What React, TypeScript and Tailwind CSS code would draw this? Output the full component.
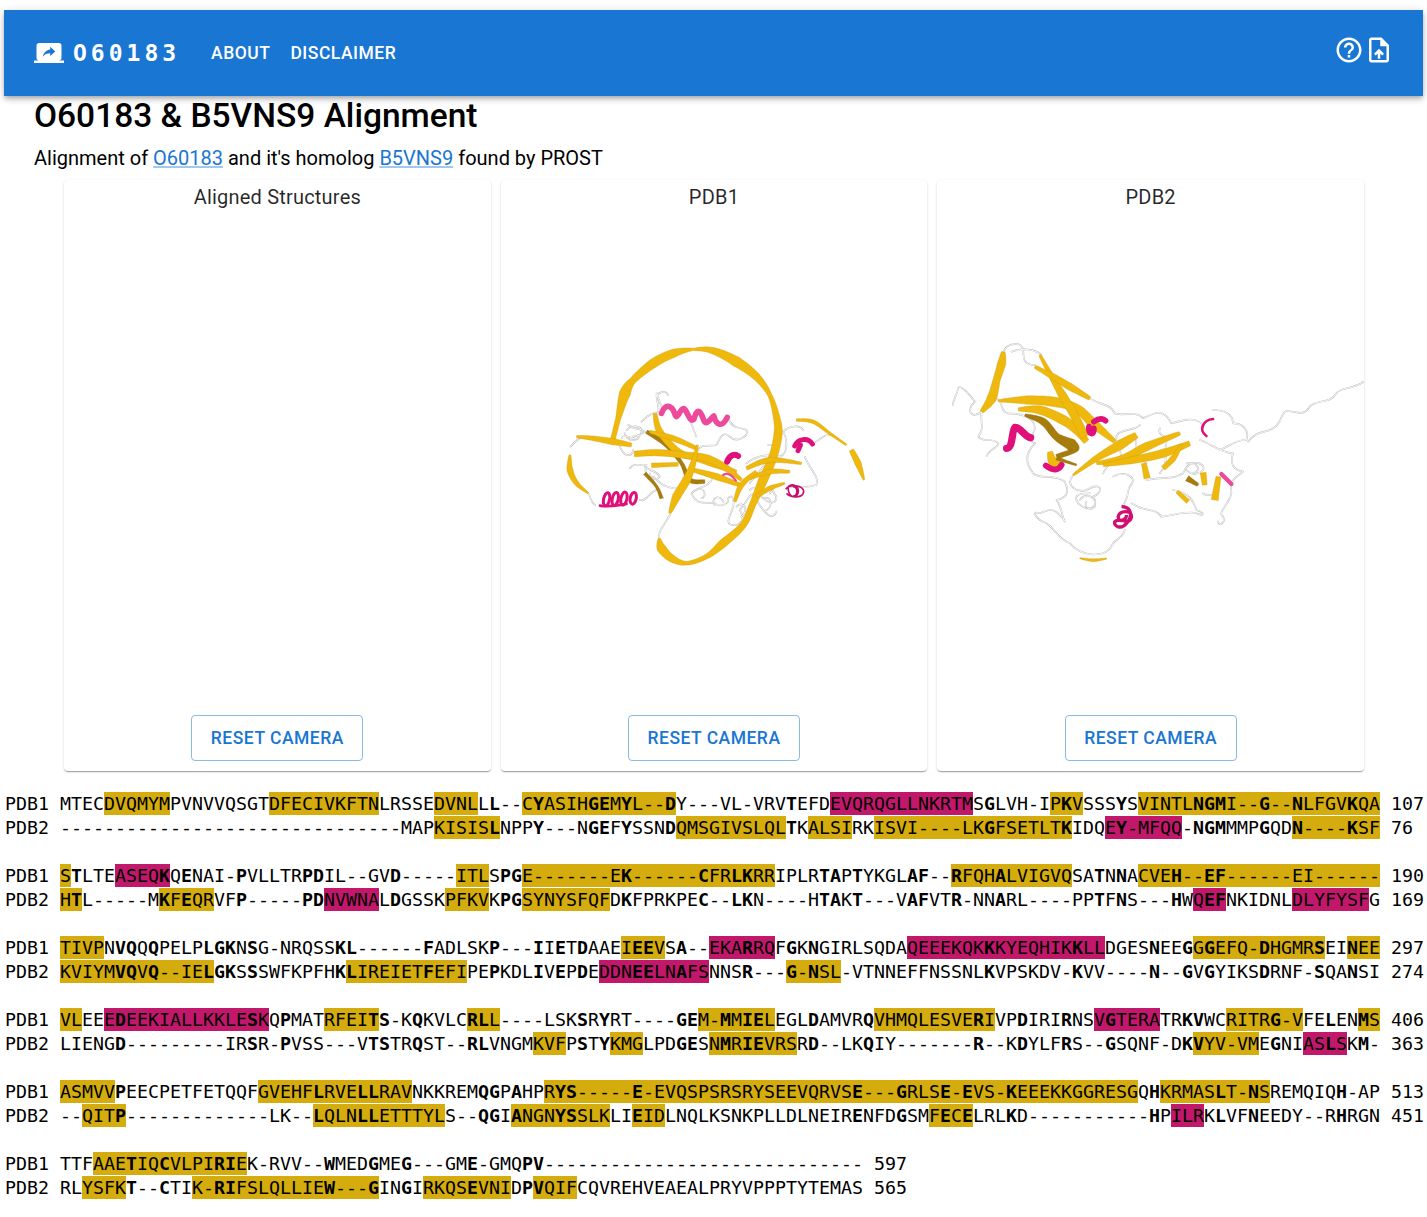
import { Fragment } from "react";

type Pt = [number, number, number];

// [..] strand, {..} helix, the rest is plain
const blocks: { a: string; b: string; na: number; nb: number }[] = [
  {
    a: "MTEC[DVQMYM]PVNVVQSGT[DFECIVKFTN]LRSSE[DVNL]LL--[CYASIHGEMYL--D]Y---VL-VRVTEFD{EVQRQGLLNKRTM}SGLVH-I[PKV]SSSYS[VINTLNGMI--G--NLFGVKQA]",
    b: "-------------------------------MAP[KISISL]NPPY---NGEFYSSND[QMSGIVSLQL]TK[ALSI]RK[ISVI----LKGFSETLTK]IDQ{EY-MFQQ}-NGMMMPGQD[N----KSF]",
    na: 107,
    nb: 76,
  },
  {
    a: "[S]TLTE{ASEQK}QENAI-PVLLTRPDIL--GVD-----[ITL]SPG[E-------EK------CFRLKRR]IPLRTAPTYKGLAF--[RFQHALVIGVQ]SATNNA[CVEH--EF------EI------]",
    b: "[HT]L-----M[KFEQR]VFP-----PD{NVWNA}LDGSSK[PFKV]KPG[SYNYSFQF]DKFPRKPEC--LKN----HTAKT---VAFVTR-NNARL----PPTFNS---HW{QEF}NKIDNL{DLYFYSF}G",
    na: 190,
    nb: 169,
  },
  {
    a: "[TIVP]NVQQQPELPLGKNSG-NRQSSKL------FADLSKP---IIETDAAE[IEEV]SA--{EKARRQ}FGKNGIRLSQDA{QEEEKQKKKYEQHIKKLL}DGESNEEG[GGEFQ-DHGMRS]EI[NEE]",
    b: "[KVIYMVQVQ--IEL]GKSSSWFKPFHK[LIREIETFEFI]PEPKDLIVEPDE{DDNEELNAFS}NNSR---[G-NSL]-VTNNEFFNSSNLKVPSKDV-KVV----N--GVGYIKSDRNF-SQANSI",
    na: 297,
    nb: 274,
  },
  {
    a: "[VL]EE{EDEEKIALLKKLESK}QPMAT[RFEIT]S-KQKVLC[RLL]----LSKSRYRT----GE[M-MMIEL]EGLDAMVRQ[VHMQLESVERI]VPDIRIRNS{VGTERA}TRKVWC[RITRG-V]FELEN[MS]",
    b: "LIENGD---------IRSR-PVSS---VTSTRQST--RLVNGM[KVF]PSTY[KMG]LPDGES[NMRIEVRS]RD--LKQIY-------R--KDYLFRS--GSQNF-DK[VYV-VM]EGNI{ASLS}KM-",
    na: 406,
    nb: 363,
  },
  {
    a: "[ASMVV]PEECPETFETQQF[GVEHFLRVELLRAV]NKKREMQGPAHP[RYS-----E-EVQSPSRSRYSEEVQRVSE---GRLSE-EVS-KEEEKKGGRESG]QH[KRMASLT-NS]REMQIQH-AP",
    b: "--[QITP]-------------LK--[LQLNLLETTTYL]S--QGI[ANGNYSSLK]LI[EID]LNQLKSNKPLLDLNEIRENFDGSM[FECE]LRLKD-----------HP{ILR}KLVFNEEDY--RHRGN",
    na: 513,
    nb: 451,
  },
  {
    a: "TTF[AAETIQCVLPIRIE]K-RVV--WMEDGMEG---GME-GMQPV-----------------------------",
    b: "RL[YSFK]T--CTI[K-RIFSLQLLIEW---G]INGI[RKQSEVNI]DP[VQIF]CQVREHVEAEALPRYVPPPTYTEMAS",
    na: 597,
    nb: 565,
  },
];

const plain = (s: string) => s.replace(/[\[\]{}]/g, "");

function SeqLine({ name, row, other, num }: { name: string; row: string; other: string; num: number }) {
  const cmp = plain(other);
  const parts = row.split(/(\[[^\]]*\]|\{[^}]*\})/).filter(Boolean);
  let pos = 0;
  return (
    <div className="h-6 leading-6 whitespace-pre">
      {name}{" "}
      {parts.map((p, i) => {
        const kind = p[0] === "[" ? "bg-[#d4ac0d]" : p[0] === "{" ? "bg-[#c2186b]" : "";
        const text = kind ? p.slice(1, -1) : p;
        return (
          <span key={i} className={`inline-block h-[23px] leading-[23px] align-top ${kind}`}>
            {text.split("").map((c, j) => {
              // identical residues are bold, the third column never reads bold in the shot
              const same = c !== "-" && c === cmp[pos] && pos !== 2;
              pos++;
              return same ? (
                <b key={j} className="font-bold">
                  {c}
                </b>
              ) : (
                <Fragment key={j}>{c}</Fragment>
              );
            })}
          </span>
        );
      })}{" "}
      {num}
    </div>
  );
}

// variable width ribbon along a smoothed centre line
function ribbonPath(pts: Pt[], f: number) {
  const P = [pts[0], ...pts, pts[pts.length - 1]];
  const out: Pt[] = [];
  for (let i = 1; i < P.length - 2; i++) {
    for (let k = 0; k < 10; k++) {
      const t = k / 10;
      const cr = (n: number) =>
        0.5 *
        (2 * P[i][n] +
          (P[i + 1][n] - P[i - 1][n]) * t +
          (2 * P[i - 1][n] - 5 * P[i][n] + 4 * P[i + 1][n] - P[i + 2][n]) * t * t +
          (3 * P[i][n] - P[i - 1][n] - 3 * P[i + 1][n] + P[i + 2][n]) * t * t * t);
      out.push([cr(0), cr(1), P[i][2] + (P[i + 1][2] - P[i][2]) * t]);
    }
  }
  out.push(pts[pts.length - 1]);
  const left: string[] = [];
  const right: string[] = [];
  out.forEach((p, i) => {
    const a = out[Math.max(0, i - 1)];
    const b = out[Math.min(out.length - 1, i + 1)];
    const dx = b[0] - a[0];
    const dy = b[1] - a[1];
    const l = Math.hypot(dx, dy) || 1;
    const nx = (-dy / l) * p[2] * f;
    const ny = (dx / l) * p[2] * f;
    left.push(`${(p[0] + nx).toFixed(1)} ${(p[1] + ny).toFixed(1)}`);
    right.unshift(`${(p[0] - nx).toFixed(1)} ${(p[1] - ny).toFixed(1)}`);
  });
  return `M${left.join("L")}L${right.join("L")}Z`;
}

function Ribbon({ pts, dark, f = 0.7 }: { pts: Pt[]; dark?: boolean; f?: number }) {
  return <path d={ribbonPath(pts, f)} fill={dark ? "#a67c0c" : "#efb80c"} stroke={dark ? "#8a6608" : "#c9980a"} strokeWidth={1} />;
}

function Loop({ d }: { d: string }) {
  return (
    <>
      <path d={d} fill="none" stroke="#b9b9b9" strokeWidth={5} strokeLinecap="round" strokeLinejoin="round" />
      <path d={d} fill="none" stroke="#f8f8f8" strokeWidth={3} strokeLinecap="round" strokeLinejoin="round" />
    </>
  );
}

function Helix({ d, w = 14, light }: { d: string; w?: number; light?: boolean }) {
  return <path d={d} fill="none" stroke={light ? "#ee4a9c" : "#e0107a"} strokeWidth={w} strokeLinecap="round" strokeLinejoin="round" />;
}

function StructureOne() {
  return (
    <svg viewBox="501 210 427 505" className="w-full h-full">
      <g transform="translate(550 330) scale(0.3333)">
        <Loop d="M62 350C75 335 85 325 95 322M115 490C125 505 120 515 135 525M270 510C295 515 300 480 325 478C335 485 320 500 340 505M328 625C325 600 345 585 360 555" />
        <Loop d="M320 195C340 180 350 185 355 195M320 195C320 215 330 235 325 245C300 250 290 260 275 275M320 190L335 230M230 300C250 280 290 290 270 315C260 340 230 330 225 310M210 350C225 385 245 380 250 360M240 415C255 395 275 410 290 405C280 430 300 460 310 450M310 440C330 460 350 480 400 475" />
        <Loop d="M535 265C550 300 570 290 590 300C600 320 560 340 540 320C520 300 510 325 500 345C480 350 455 340 445 360M440 320C430 305 430 285 420 275M490 440C480 475 440 470 425 490C440 530 470 515 495 520C510 535 540 520 535 505C545 490 560 510 545 545C535 570 530 580 545 585C570 590 590 570 570 540C600 510 590 490 625 490C650 520 680 530 680 500C660 480 680 470 660 490" />
        <Loop d="M590 400C630 370 660 375 690 380C720 370 710 320 700 305C720 285 750 285 760 300M650 390C640 420 610 440 600 460M790 340C815 330 820 310 850 315M765 380C780 420 810 440 800 465C770 475 760 470 720 470M620 510C650 560 670 570 680 545M655 345C680 340 680 360 650 395" />
        <Loop d="M235 285C255 300 275 295 285 305C265 325 250 310 240 330M215 325C225 305 250 335 265 325M495 525C480 505 510 490 520 515M440 480C460 465 475 500 455 505M560 530C580 510 600 540 575 560M600 480C620 460 640 500 610 515M640 505C665 495 670 530 650 540M285 410C300 425 320 420 330 440C320 455 300 445 300 430" />
        <Ribbon pts={[[188, 332, 10], [205, 265, 11], [225, 190, 24], [250, 150, 14], [310, 100, 20], [370, 70, 18], [430, 58, 5], [490, 62, 14], [560, 95, 22], [620, 140, 16], [660, 195, 9], [680, 260, 14], [685, 310, 18], [670, 380, 18], [640, 450, 20], [610, 520, 14], [580, 585, 14], [520, 640, 18], [470, 680, 10], [410, 700, 8], [365, 685, 16], [335, 655, 20], [328, 625, 4]]} />
        <Ribbon pts={[[60, 375, 4], [60, 420, 13], [80, 460, 10], [115, 490, 3]]} />
        <Ribbon pts={[[80, 320, 5], [130, 325, 10], [190, 335, 14], [245, 345, 8]]} />
        <Ribbon dark pts={[[290, 305, 8], [350, 345, 10], [395, 400, 8], [420, 450, 10], [465, 455, 8]]} />
        <Ribbon pts={[[315, 250, 8], [330, 305, 14], [385, 365, 14], [440, 385, 12], [500, 405, 14], [560, 425, 6]]} />
        <Ribbon pts={[[300, 305, 6], [370, 325, 12], [440, 355, 8]]} />
        <Ribbon pts={[[253, 372, 12], [320, 368, 14], [400, 375, 14], [470, 385, 16], [530, 415, 14], [575, 450, 6]]} />
        <Ribbon pts={[[430, 420, 8], [500, 440, 14], [570, 465, 8]]} />
        <Ribbon pts={[[305, 406, 10], [385, 403, 8]]} />
        <Ribbon pts={[[360, 550, 5], [380, 500, 18], [410, 450, 18], [430, 400, 12], [443, 345, 4]]} />
        <Ribbon dark pts={[[285, 430, 8], [320, 470, 6], [335, 505, 8]]} />
        <Ribbon pts={[[590, 415, 8], [660, 390, 12], [755, 400, 5]]} />
        <Ribbon pts={[[600, 445, 6], [660, 425, 11], [720, 425, 6]]} />
        <Ribbon pts={[[555, 515, 6], [575, 465, 12], [620, 425, 8]]} />
        <Ribbon pts={[[620, 500, 8], [660, 475, 10], [705, 460, 4]]} />
        <Ribbon pts={[[740, 270, 5], [790, 275, 8], [840, 310, 6], [890, 345, 4]]} />
        <Ribbon pts={[[905, 360, 10], [925, 400, 14], [943, 450, 3]]} />
        <Helix light d="M335 250C345 222 365 222 375 252C382 278 392 226 405 238C415 250 420 278 432 268C440 236 450 236 460 266C468 292 480 268 492 258C500 288 518 292 532 262" w={17} />
        <Helix d="M150 527C175 532 190 528 230 522" w={8} />
        <ellipse cx="170" cy="508" rx="9" ry="20" transform="rotate(12 170 508)" fill="none" stroke="#e0107a" strokeWidth={9} />
        <ellipse cx="196" cy="507" rx="9" ry="20" transform="rotate(12 196 507)" fill="none" stroke="#e0107a" strokeWidth={9} />
        <ellipse cx="222" cy="506" rx="9" ry="20" transform="rotate(12 222 506)" fill="none" stroke="#e0107a" strokeWidth={9} />
        <ellipse cx="250" cy="505" rx="9" ry="18" transform="rotate(12 250 505)" fill="none" stroke="#e0107a" strokeWidth={9} />
        <path d="M708 478C720 460 760 465 762 485C760 505 725 505 710 490M715 470C730 458 750 470 745 490C735 510 715 500 715 470M730 470C745 470 745 500 730 498" fill="none" stroke="#c8106c" strokeWidth={5} />
        <Helix d="M735 348C745 325 775 322 788 342" w={15} />
        <Helix d="M752 345L745 362" w={15} />
        <Helix d="M532 395C540 375 555 370 565 378" w={18} />
        <Helix light d="M520 435C535 425 550 440 558 452" w={7} />
      </g>
    </svg>
  );
}

function StructureTwo() {
  const f = 0.9;
  return (
    <svg viewBox="937 210 427 505" className="w-full h-full">
      <g transform="translate(940 330) scale(0.3333)">
        <Loop d="M125 245C90 270 80 240 105 215C90 195 60 160 55 175C50 195 40 210 38 225M125 245C120 280 135 290 115 320C130 340 155 320 175 340C180 350 150 355 140 378M170 205C190 215 180 245 205 250C240 250 285 260 285 295C270 330 270 335 285 340" />
        <Loop d="M190 65C200 40 245 30 250 60C250 85 250 105 285 105M215 65C250 50 290 60 305 75M285 340C255 370 255 400 280 430C300 450 345 430 375 455C385 480 390 500 350 510C370 540 365 560 375 575C340 520 320 545 300 550C270 540 290 570 320 580C350 600 350 625 390 640C420 680 500 690 520 640C530 625 550 625 555 600" />
        <Loop d="M450 205C490 230 510 220 525 250C550 260 590 240 610 265C640 250 670 230 695 280C730 270 760 260 785 280M530 340C520 290 570 310 600 285M660 295C650 320 690 330 720 310M820 240C850 240 880 250 880 280C910 280 930 300 920 330C880 330 870 350 840 360M780 330C810 340 850 370 880 370C870 400 880 420 910 425C880 450 870 450 875 490C870 520 830 550 850 560C860 580 835 590 835 575" />
        <Loop d="M400 435C370 470 420 490 440 480C490 450 490 490 460 500C480 530 450 550 415 520C400 500 410 490 450 490M520 440C550 420 600 440 570 470C560 480 570 500 550 525M575 520C620 550 640 530 665 560C690 560 740 540 770 550C790 560 800 550 770 540C760 520 760 490 700 480M620 450C670 440 700 450 730 430C750 380 800 400 790 420C780 430 760 440 740 420M790 490C800 500 820 490 825 500" />
        <Loop d="M925 335C950 300 980 310 1000 295C1030 280 1020 250 1040 243C1075 245 1090 260 1110 230C1130 205 1170 225 1190 190C1200 170 1240 180 1272 155" />
        <Loop d="M540 340C530 370 560 385 545 400C520 390 500 405 490 430M590 320C585 360 595 380 620 400M680 340C670 370 690 400 660 430M740 400C770 395 790 420 760 430M420 510C440 485 470 500 465 530C450 545 430 530 440 515" />
        <Ribbon f={f} pts={[[125, 245, 6], [155, 205, 16], [170, 150, 12], [185, 100, 14], [190, 65, 6]]} />
        <Ribbon f={f} pts={[[175, 212, 3], [260, 210, 14], [340, 215, 16], [410, 235, 14], [460, 280, 16], [525, 335, 6]]} />
        <Ribbon f={f} pts={[[235, 238, 5], [300, 240, 14], [370, 270, 16], [410, 300, 14], [440, 335, 10]]} />
        <Ribbon f={f} dark pts={[[255, 255, 4], [310, 275, 12], [350, 320, 12], [395, 345, 20], [405, 360, 8], [350, 380, 8]]} />
        <Ribbon f={f} pts={[[300, 75, 4], [330, 130, 8], [370, 200, 14], [400, 250, 14], [435, 320, 14]]} />
        <Ribbon f={f} pts={[[285, 110, 5], [340, 140, 10], [390, 170, 12], [450, 205, 6]]} />
        <Ribbon f={f} pts={[[330, 365, 8], [340, 395, 16], [370, 400, 6]]} />
        <Ribbon f={f} dark pts={[[350, 385, 6], [410, 405, 3]]} />
        <Ribbon f={f} pts={[[400, 435, 3], [470, 385, 10], [540, 345, 16], [590, 315, 10]]} />
        <Ribbon f={f} pts={[[470, 400, 5], [550, 385, 12], [620, 350, 14], [720, 310, 6]]} />
        <Ribbon f={f} pts={[[490, 405, 5], [580, 390, 12], [670, 370, 14], [750, 340, 8]]} />
        <Ribbon f={f} pts={[[612, 400, 8], [622, 445, 11]]} />
        <Ribbon f={f} pts={[[670, 415, 8], [700, 385, 10], [725, 345, 4]]} />
        <Ribbon f={f} pts={[[712, 485, 6], [745, 515, 8]]} />
        <Ribbon f={f} dark pts={[[742, 445, 10], [775, 465, 5]]} />
        <Ribbon f={f} pts={[[790, 428, 10], [795, 465, 8]]} />
        <Ribbon f={f} pts={[[836, 440, 8], [825, 510, 12]]} />
        <Ribbon f={f} pts={[[420, 685, 2], [460, 691, 5], [500, 686, 2]]} />
        <Helix d="M200 355C220 355 215 300 225 292C240 290 255 320 272 323" w={22} />
        <Helix d="M318 407C335 420 355 425 365 405" w={18} />
        <Helix d="M447 290C445 315 465 318 462 295M462 275C480 262 492 268 497 272" w={17} />
        <Helix d="M800 318C775 300 790 270 820 267" w={8} />
        <Helix light d="M845 432L875 462" w={13} />
        <path d="M545 530C575 530 580 560 560 580C545 600 520 590 525 575C540 560 570 590 575 560C575 540 540 540 535 560C535 580 560 570 560 555" fill="none" stroke="#d00f70" strokeWidth={10} />
      </g>
    </svg>
  );
}

function Panel({ title, children }: { title: string; children?: React.ReactNode }) {
  return (
    <div className="flex flex-col h-[591px] bg-white rounded shadow-[0_2px_1px_-1px_rgba(0,0,0,0.2),0_1px_1px_0_rgba(0,0,0,0.14),0_1px_3px_0_rgba(0,0,0,0.12)]">
      <div className="h-[30px] pt-[3px] text-center text-[20px] leading-[28px] tracking-[0.01em] text-black/85">{title}</div>
      <div className="flex-1 min-h-0">{children}</div>
      <div className="flex justify-center pb-[10px]">
        <button className="h-[46px] w-[172px] rounded border border-[#1976d2]/50 text-[17.5px] font-medium tracking-[0.02857em] text-[#1976d2]">RESET CAMERA</button>
      </div>
    </div>
  );
}

export default function App() {
  return (
    <div className="px-1 pt-[10px] font-['Roboto',sans-serif] text-black">
      <header className="flex h-[86px] items-center justify-between bg-[#1976d2] pl-[30px] pr-[29px] text-white shadow-[0_2px_4px_-1px_rgba(0,0,0,0.2),0_4px_5px_0_rgba(0,0,0,0.14),0_1px_10px_0_rgba(0,0,0,0.12)]">
        <div className="flex items-center">
          <svg viewBox="0 0 24 24" className="w-[30px] h-[30px] fill-white">
            <path d="M20 18c1.1 0 1.99-.9 1.99-2L22 6c0-1.11-.9-2-2-2H4c-1.11 0-2 .89-2 2v10c0 1.1.89 2 2 2H0v2h24v-2h-4zm-7-3.53v-2.19c-2.78 0-4.61.85-6 2.72.56-2.67 2.11-5.33 6-5.87V7l4 3.73-4 3.74z" />
          </svg>
          <span className="ml-[9px] font-['DejaVu_Sans_Mono',monospace] text-[23px] font-bold tracking-[4px]">O60183</span>
          <nav className="ml-[31px] flex gap-[20px] text-[17.5px] font-medium tracking-[0.02857em]">
            <a>ABOUT</a>
            <a>DISCLAIMER</a>
          </nav>
        </div>
        <div className="flex mb-[6px]">
          <svg viewBox="0 0 24 24" className="w-[30px] h-[30px] fill-white">
            <path d="M11 18h2v-2h-2v2zm1-16C6.48 2 2 6.48 2 12s4.48 10 10 10 10-4.48 10-10S17.52 2 12 2zm0 18c-4.41 0-8-3.59-8-8s3.59-8 8-8 8 3.59 8 8-3.59 8-8 8zm0-14c-2.21 0-4 1.79-4 4h2c0-1.1.9-2 2-2s2 .9 2 2c0 2-3 1.75-3 5h2c0-2.25 3-2.5 3-5 0-2.21-1.79-4-4-4z" />
          </svg>
          <svg viewBox="0 0 24 24" className="w-[30px] h-[30px] fill-white">
            <path d="M14 2H6c-1.1 0-1.99.9-1.99 2L4 20c0 1.1.89 2 1.99 2H18c1.1 0 2-.9 2-2V8l-6-6zm4 18H6V4h7v5h5v11zM8 15.01l1.41 1.41L11 14.84V19h2v-4.16l1.59 1.59L16 15.01 12.01 11 8 15.01z" />
          </svg>
        </div>
      </header>

      <div className="pl-[30px]">
        <h1 className="pt-px text-[33.5px] leading-[38px] font-medium">O60183 &amp; B5VNS9 Alignment</h1>
        <p className="mt-[9px] text-[20px] leading-[28px]">
          Alignment of <a className="text-[#1976d2] underline decoration-[#1976d2]/40">O60183</a> and it's homolog{" "}
          <a className="text-[#1976d2] underline decoration-[#1976d2]/40">B5VNS9</a> found by PROST
        </p>
      </div>

      <div className="mt-[8px] ml-[60px] grid w-[1300px] grid-cols-3 gap-[10px]">
        <Panel title="Aligned Structures" />
        <Panel title="PDB1">
          <StructureOne />
        </Panel>
        <Panel title="PDB2">
          <StructureTwo />
        </Panel>
      </div>

      <div className="mt-[21px] ml-px font-['DejaVu_Sans_Mono',monospace] text-[18.27px] tracking-[-0.004px]">
        {blocks.map((b, i) => (
          <div key={i} className="mb-6 last:mb-0">
            <SeqLine name="PDB1" row={b.a} other={b.b} num={b.na} />
            <SeqLine name="PDB2" row={b.b} other={b.a} num={b.nb} />
          </div>
        ))}
      </div>
    </div>
  );
}
